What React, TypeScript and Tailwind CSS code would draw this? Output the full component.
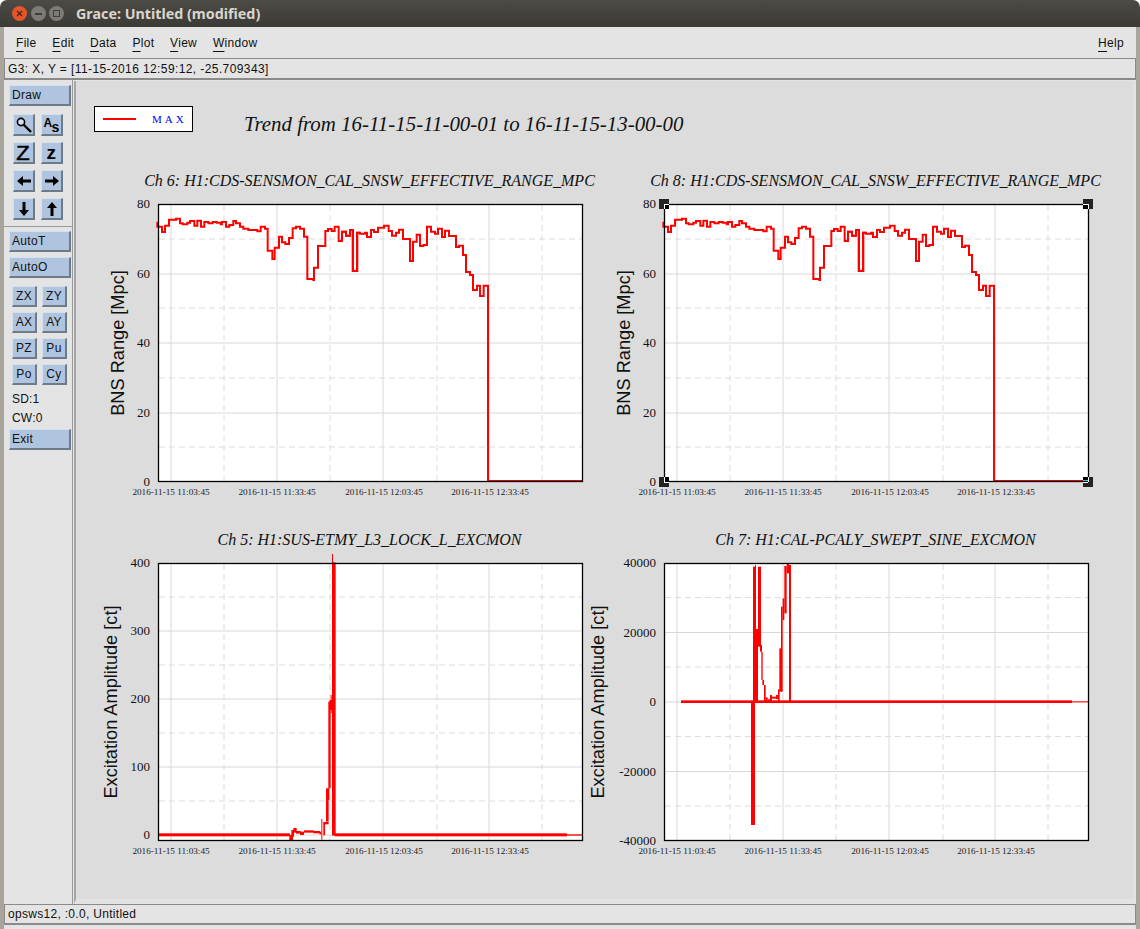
import React from "react";

const RED = "#ff0000";
const serif = '"Liberation Serif", serif';
const sans = '"Liberation Sans", sans-serif';

type Pt = [number, number];
type R = [number, number, number, number];

const traceA: Pt[] = [[172,155],[172,170],[186,170],[186,186],[195,186],[195,167],[207,167],[207,149],[228,149],[228,146],[240,146],[240,160],[248,160],[248,163],[262,163],[262,158],[270,158],[270,153],[283,153],[283,167],[292,167],[292,152],[303,152],[303,170],[313,170],[313,156],[325,156],[325,160],[338,160],[338,156],[350,156],[350,158],[362,158],[362,163],[366,163],[366,156],[378,156],[378,170],[388,170],[388,165],[400,165],[400,153],[408,153],[408,160],[420,160],[420,170],[430,170],[430,176],[445,176],[445,180],[472,180],[472,184],[482,184],[482,170],[495,170],[495,176],[503,176],[503,242],[517,242],[517,267],[524,267],[524,233],[537,233],[537,200],[546,200],[546,217],[556,217],[556,222],[567,222],[567,204],[578,204],[578,175],[588,175],[588,170],[600,170],[600,176],[612,176],[612,200],[622,200],[622,327],[640,327],[640,330],[642,330],[642,293],[654,293],[654,228],[676,228],[676,183],[684,183],[684,177],[695,177],[695,183],[704,183],[704,170],[716,170],[716,213],[726,213],[726,185],[738,185],[738,197],[750,197],[750,180],[758,180],[758,303],[772,303],[772,188],[780,188]];
const traceB: Pt[] = [[0,152],[6,152],[6,125],[18,125],[18,137],[30,137],[30,120],[39,120],[39,243],[51,243],[51,128],[60,128],[60,131],[75,131],[75,128],[81,128],[81,141],[93,141],[93,120],[102,120],[102,126],[114,126],[114,113],[132,113],[132,107],[146,107],[146,123],[156,123],[156,137],[168,137],[168,128],[177,128],[177,119],[189,119],[189,147],[210,147],[210,213],[219,213],[219,155],[230,155],[230,134],[240,134],[240,168],[250,168],[250,165],[261,165],[261,110],[273,110],[273,125],[285,125],[285,131],[294,131],[294,116],[306,116],[306,141],[315,141],[315,122],[327,122],[327,138],[348,138],[348,171],[357,171],[357,167],[369,167],[369,195],[378,195],[378,246],[390,246],[390,255],[399,255],[399,300],[411,300],[411,287],[420,287],[420,318],[431,318],[431,287],[444,287],[444,873],[726,873]];

const blocksC: R[] = [[-306,850,396,9],[88,855,11,18],[94,840,8,20],[100,834,10,14],[108,843,14,8],[120,845,12,10],[132,841,30,7],[160,843,20,7],[178,845,6,8],[184,807,3,62],[190,820,5,36],[190,816,16,7],[198,715,8,100],[203,715,5,35],[205,455,7,260],[209,450,8,30],[212,435,3,55],[216,12,3,30],[216,37,11,820],[225,850,696,9],[921,853,45,4]];
const blocksD: R[] = [[-147,451,1173,8],[1026,454,48,3],[63,455,12,370],[69,50,9,405],[75,45,3,20],[78,237,6,218],[84,50,9,240],[90,285,6,20],[94,305,4,85],[97,390,5,15],[102,405,5,50],[107,442,6,14],[113,448,8,8],[120,435,6,20],[126,440,14,6],[138,435,6,12],[144,418,5,38],[148,295,7,130],[153,170,5,255],[158,145,5,65],[163,48,7,142],[170,42,7,28],[177,45,6,410]];

const line = (pts: Pt[]) => pts.map((p, i) => `${i ? "L" : "M"}${p[0]} ${p[1]}`).join(" ");

const VX = [224, 330, 437, 542];
const SX = [171, 277, 383, 489];
const LX = [171, 277, 384, 490];

function Plot({ title, ylabel, ylx, ticks, dashes, children, handles }: {
  title: string; ylabel: string; ylx: number; ticks: [string, number][]; dashes: number[]; children: React.ReactNode; handles?: boolean;
}) {
  const solid = ticks.map((t) => t[1]).filter((y) => y > 204.5 && y < 481.5);
  return (
    <svg viewBox="85 165 506 359" className="h-[359px] w-[506px] overflow-visible">
      <text x={369.5} y={186} textAnchor="middle" fontFamily={serif} fontStyle="italic" fontSize={16} fill="#111">{title}</text>
      <rect x={158.5} y={204.5} width={424} height={277.5} fill="#fff" />
      {VX.map((x) => <line key={x} x1={x} x2={x} y1={205} y2={482} stroke="#dcdcdc" strokeWidth={1} strokeDasharray="6 4" />)}
      {SX.map((x) => <line key={x} x1={x} x2={x} y1={205} y2={482} stroke="#d8d8d8" strokeWidth={1} />)}
      {dashes.map((y) => <line key={y} x1={159} x2={582} y1={y} y2={y} stroke="#dcdcdc" strokeWidth={1} strokeDasharray="6 4" />)}
      {solid.map((y) => <line key={y} x1={159} x2={582} y1={y} y2={y} stroke="#d8d8d8" strokeWidth={1} />)}
      {children}
      <rect x={158.5} y={204.5} width={424} height={277} fill="none" stroke="#000" strokeWidth={1.3} />
      {ticks.map(([l, y]) => <text key={l} x={150} y={y + 4} textAnchor="end" fontFamily={serif} fontSize={13} fill="#111">{l}</text>)}
      {LX.map((x, i) => (
        <text key={x} x={x} y={495} textAnchor="middle" fontFamily={serif} fontSize={9.2} fill="#222">
          {`2016-11-15 ${["11:03:45", "11:33:45", "12:03:45", "12:33:45"][i]}`}
        </text>
      ))}
      <text transform={`translate(${ylx} 343) rotate(-90)`} textAnchor="middle" fontFamily={sans} fontSize={18.2} fill="#111">{ylabel}</text>
      {handles && [[158, 204], [582, 204], [158, 482], [582, 482]].map(([x, y]) => {
        const inX = x < 300 ? x : x - 5;
        const inY = y < 300 ? y : y - 5;
        return (
          <g key={`${x}-${y}`}>
            <rect x={x - 5} y={y - 5} width={10} height={10} fill="#232323" />
            <rect x={inX} y={inY} width={5} height={5} fill="#000" />
            <rect x={x} y={inY} width={1} height={5} fill="#fff" />
            <rect x={inX} y={y} width={5} height={1} fill="#fff" />
            {x > 300 && y > 300 && <rect x={577} y={480} width={5} height={1} fill="#00e0e0" />}
          </g>
        );
      })}
    </svg>
  );
}

function Range() {
  return (
    <g fill="none" stroke={RED} strokeWidth={6}>
      <g transform="translate(100 170) scale(0.33333)"><path d={line(traceA)} /></g>
      <g transform="translate(340 190) scale(0.33333)"><path d={line(traceB)} /></g>
    </g>
  );
}

const rangeTicks: [string, number][] = [["80", 204], ["60", 274], ["40", 343], ["20", 413], ["0", 482]];
const rangeDash = [239, 308, 378, 447];

function Btn({ children, className = "" }: { children: React.ReactNode; className?: string }) {
  return (
    <div className={`flex items-center border-t border-l border-t-[#d5e0ee] border-l-[#d5e0ee] border-r-2 border-b-2 border-r-[#6c7a89] border-b-[#6c7a89] bg-[#afc4de] text-[12px] tracking-[0.3px] text-[#111] ${className}`}>
      {children}
    </div>
  );
}

function Wide({ label, className = "" }: { label: string; className?: string }) {
  return <Btn className={`h-[21px] w-[62px] pl-[2px] ${className}`}>{label}</Btn>;
}

function Ico({ children }: { children: React.ReactNode }) {
  return <Btn className="h-[22px] w-[22px] justify-center">{children}</Btn>;
}

function Small({ label }: { label: string }) {
  return <Btn className="h-[21px] w-[25px] justify-center">{label}</Btn>;
}

function Arrow({ d }: { d: string }) {
  return (
    <svg width="16" height="16" viewBox="0 0 16 16" fill="#000"><path d={d} /></svg>
  );
}

function Mn({ t }: { t: string }) {
  return (
    <span>
      <span className="underline decoration-1 underline-offset-[4px]">{t[0]}</span>
      {t.slice(1)}
    </span>
  );
}

export default function App() {
  return (
    <div className="flex h-[929px] w-[1140px] flex-col overflow-hidden bg-white" style={{ fontFamily: sans }}>
      <div className="flex h-[27px] items-center rounded-t-[7px] bg-gradient-to-b from-[#4c4b46] to-[#3b3a36]">
        <div className="ml-[12px] flex h-[15px] w-[15px] items-center justify-center rounded-full bg-[#e4552a] text-[#5c2412]">
          <svg width="7" height="7" viewBox="0 0 7 7" stroke="currentColor" strokeWidth="1.5"><path d="M1 1l5 5M6 1L1 6" /></svg>
        </div>
        <div className="ml-[4px] flex h-[15px] w-[15px] items-center justify-center rounded-full bg-[#7c7b75]">
          <div className="h-[2px] w-[7px] bg-[#3f3e3a]" />
        </div>
        <div className="ml-[3px] flex h-[15px] w-[15px] items-center justify-center rounded-full bg-[#7c7b75]">
          <div className="h-[7px] w-[7px] border border-[#3f3e3a]" />
        </div>
        <div className="ml-[12px] text-[14.3px] font-bold text-[#dad6cc]" style={{ fontFamily: '"Noto Sans", sans-serif' }}>Grace: Untitled (modified)</div>
      </div>

      <div className="flex min-h-0 flex-1 flex-col bg-[#a9a59d] px-[4px]">
        <div className="flex h-[31px] shrink-0 items-center bg-[#e4e4e4] pl-[12px] pr-[12px] text-[12px] tracking-[0.3px] text-[#111]">
          <div className="flex gap-[15.8px]">
            <Mn t="File" /><Mn t="Edit" /><Mn t="Data" /><Mn t="Plot" /><Mn t="View" /><Mn t="Window" />
          </div>
          <div className="ml-auto"><Mn t="Help" /></div>
        </div>

        <div className="flex h-[22px] shrink-0 items-center border border-b-2 border-[#8a8a8a] bg-[#e4e4e4] pl-[3px] text-[12px] tracking-[0.4px] text-[#111]">
          G3: X, Y = [11-15-2016 12:59:12, -25.709343]
        </div>

        <div className="flex min-h-0 flex-1 bg-[#e4e4e4]">
          <div className="flex w-[69px] shrink-0 flex-col border-r border-[#999] pt-[5px]">
            <Wide label="Draw" className="ml-[5px]" />
            <div className="ml-[9px] mt-[8px] grid w-[50px] grid-cols-[22px_22px] gap-x-[6px] gap-y-[6px]">
              <Ico>
                <svg width="18" height="18" viewBox="0 0 18 18" fill="none" stroke="#000" strokeWidth="1.6"><circle cx="6" cy="6" r="3.6" fill="#d5e0ee" /><path d="M8.5 8.5L16 16" strokeWidth="2.4" /></svg>
              </Ico>
              <Ico>
                <span className="-translate-y-[2px] text-[12px] font-bold leading-none text-black">A</span>
                <span className="-ml-[1px] translate-y-[2px] text-[14px] font-bold leading-none text-black">s</span>
              </Ico>
              <Ico><span className="scale-x-[1.1] text-[20px] font-normal leading-none text-black" style={{ WebkitTextStroke: "0.5px #000" }}>Z</span></Ico>
              <Ico><span className="text-[19px] font-bold leading-none text-black">z</span></Ico>
              <Ico><Arrow d="M1 8l6-5v3.5h8v3H7V13z" /></Ico>
              <Ico><Arrow d="M15 8l-6-5v3.5H1v3h8V13z" /></Ico>
              <Ico><Arrow d="M8 15l-5-6h3.5V1h3v8H13z" /></Ico>
              <Ico><Arrow d="M8 1l-5 6h3.5v8h3V7H13z" /></Ico>
            </div>
            <div className="mt-[6px] border-t border-[#999]" />
            <Wide label="AutoT" className="ml-[5px] mt-[4px]" />
            <Wide label="AutoO" className="ml-[5px] mt-[5px]" />
            <div className="ml-[8px] mt-[8px] grid w-[55px] grid-cols-[25px_25px] gap-x-[5px] gap-y-[5px]">
              <Small label="ZX" /><Small label="ZY" />
              <Small label="AX" /><Small label="AY" />
              <Small label="PZ" /><Small label="Pu" />
              <Small label="Po" /><Small label="Cy" />
            </div>
            <div className="ml-[8px] mt-[5px] text-[12px] leading-[19px] tracking-[0.2px] text-[#111]">SD:1</div>
            <div className="ml-[8px] text-[12px] leading-[19px] tracking-[0.2px] text-[#111]">CW:0</div>
            <Wide label="Exit" className="ml-[5px] mt-[1px]" />
          </div>

          <div className="ml-[1px] mt-[1px] min-w-0 flex-1 border-b-[5px] border-l-2 border-r-[3px] border-b-[#e3e3e3] border-l-[#a6a6a6] border-r-[#e3e3e3] bg-[#dcdcdc]">
            <div className="flex items-start pl-[18px] pt-[25px]">
              <div className="flex h-[26px] w-[99px] shrink-0 items-center border border-black bg-white pl-[8px]">
                <div className="h-[2px] w-[33px] bg-[#ff0000]" />
                <div className="ml-[16px] text-[11px] tracking-[3px] text-[#0000ff]" style={{ fontFamily: serif }}>MAX</div>
              </div>
              <div className="ml-[51px] whitespace-nowrap text-[20.9px] italic leading-[36px] text-[#111]" style={{ fontFamily: serif }}>
                Trend from 16-11-15-11-00-01 to 16-11-15-13-00-00
              </div>
            </div>
            <div className="mt-[23px] grid grid-cols-[506px_506px] pl-[9px]">
              <Plot title="Ch 6: H1:CDS-SENSMON_CAL_SNSW_EFFECTIVE_RANGE_MPC" ylabel="BNS Range [Mpc]" ylx={124} ticks={rangeTicks} dashes={rangeDash}>
                <Range />
              </Plot>
              <Plot handles title="Ch 8: H1:CDS-SENSMON_CAL_SNSW_EFFECTIVE_RANGE_MPC" ylabel="BNS Range [Mpc]" ylx={124} ticks={rangeTicks} dashes={rangeDash}>
                <Range />
              </Plot>
              <Plot title="Ch 5: H1:SUS-ETMY_L3_LOCK_L_EXCMON" ylabel="Excitation Amplitude [ct]" ylx={117}
                ticks={[["400", 204], ["300", 272], ["200", 340], ["100", 408], ["0", 476]]} dashes={[238, 306, 374, 442]}>
                <g transform="translate(260 191) scale(0.33333)" fill={RED}>
                  {blocksC.map((r, i) => <rect key={i} x={r[0]} y={r[1]} width={r[2]} height={r[3]} />)}
                </g>
              </Plot>
              <Plot title="Ch 7: H1:CAL-PCALY_SWEPT_SINE_EXCMON" ylabel="Excitation Amplitude [ct]" ylx={98}
                ticks={[["40000", 204], ["20000", 273.5], ["0", 343], ["-20000", 412.5], ["-40000", 482]]} dashes={[238.5, 308, 377.5, 447]}>
                <g transform="translate(224 191) scale(0.33333)" fill={RED}>
                  {blocksD.map((r, i) => <rect key={i} x={r[0]} y={r[1]} width={r[2]} height={r[3]} />)}
                </g>
              </Plot>
            </div>
          </div>
        </div>

        <div className="flex h-[21px] shrink-0 items-center border border-b-2 border-[#8a8a8a] bg-[#e4e4e4] pl-[3px] text-[12px] tracking-[0.3px] text-[#111]">
          opsws12, :0.0, Untitled
        </div>
        <div className="h-[4px] shrink-0 bg-[#e4e4e4]" />
      </div>
    </div>
  );
}
